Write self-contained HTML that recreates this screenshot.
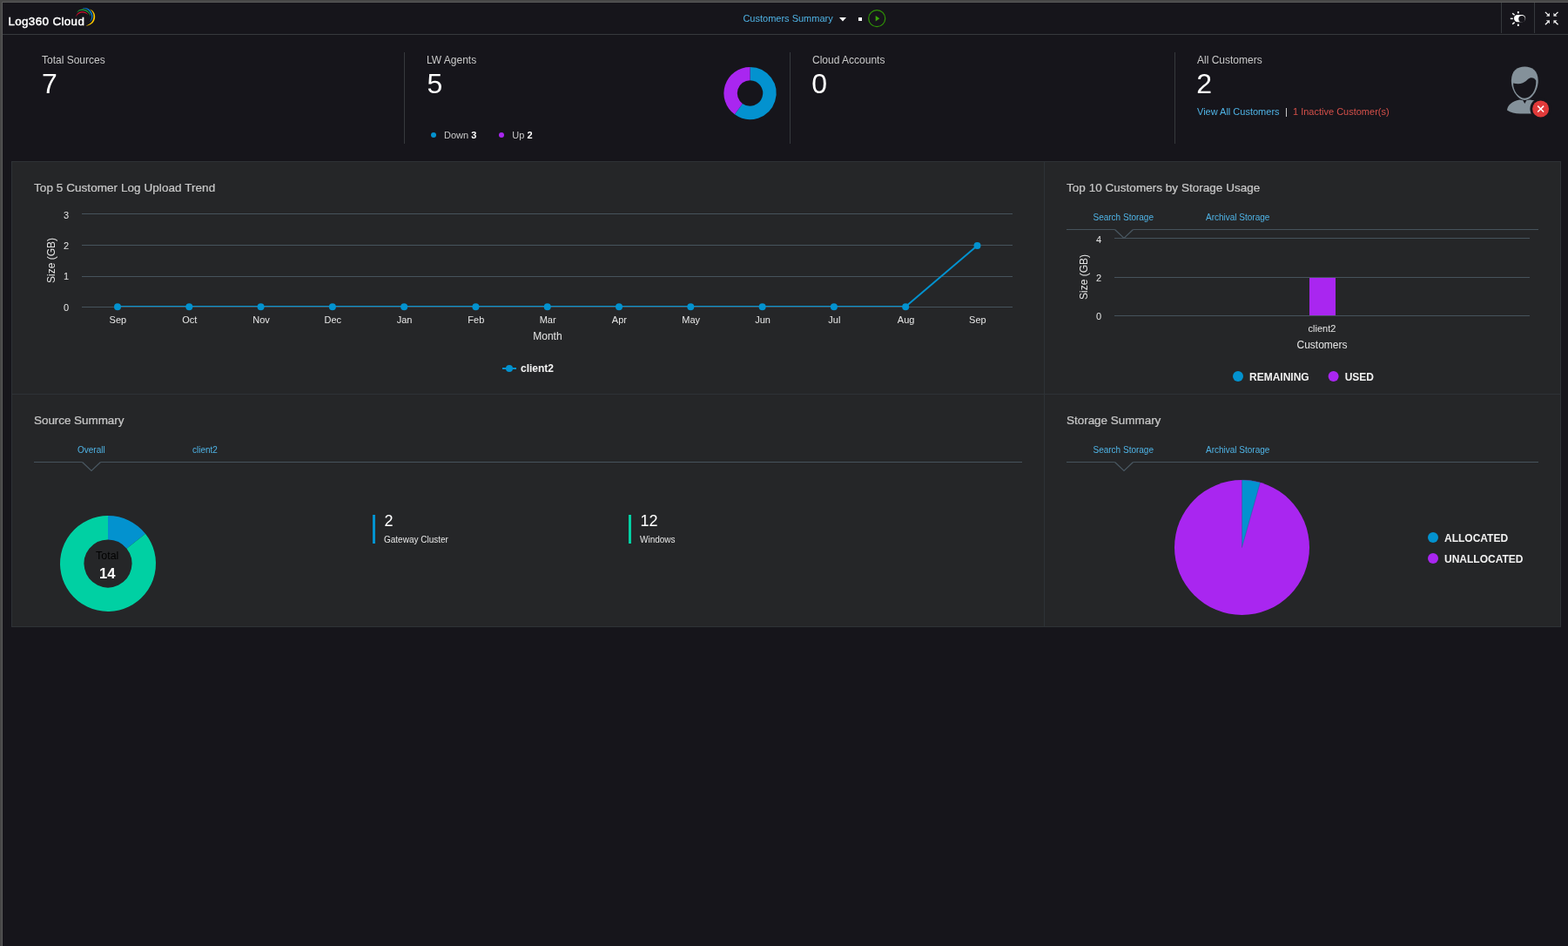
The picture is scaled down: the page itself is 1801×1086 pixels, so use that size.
<!DOCTYPE html>
<html lang="en">
<head>
<meta charset="utf-8">
<title>Log360 Cloud - Customers Summary</title>
<style>
*{box-sizing:border-box;margin:0;padding:0}
html,body{width:1801px;height:1086px;overflow:hidden;background:#16151b}
body{font-family:"Liberation Sans",Arial,sans-serif;color:#fff;position:relative;font-size:12px}
.abs{position:absolute}
.t{position:absolute;white-space:nowrap;line-height:1}
#frameT{left:0;top:0;width:1801px;height:2px;background:#474747}
#frameT2{left:2px;top:2px;width:1799px;height:1px;background:#5a5a5a}
#frameL{left:0;top:0;width:2px;height:1086px;background:#474747}
#frameL2{left:2px;top:2px;width:1px;height:1084px;background:#5a5a5a}
#hdrLine{left:3px;top:39px;width:1798px;height:1px;background:#36393d}
.vsep{position:absolute;width:1px;background:#36393d}
.lbl{font-size:12px;color:#c9c9c9}
.num{font-size:32px;color:#fff}
.link{font-size:11px}
.ptitle{font-size:13.5px;color:#c8c8c8;-webkit-text-stroke:0.22px #c8c8c8}
.tab{font-size:10px;color:#4fb3e5}
#panels{left:13px;top:185px;width:1780px;height:535px;background:#252628;border:1px solid #2e3236}
svg{position:absolute;left:0;top:0;overflow:visible}
svg text{font-family:"Liberation Sans",Arial,sans-serif}
</style>
</head>
<body>
<div id="root" style="position:absolute;left:0;top:0;width:1801px;height:1086px;will-change:transform">
<div class="abs" id="frameT"></div>
<div class="abs" id="frameL"></div>
<div class="abs" id="frameT2"></div>
<div class="abs" id="frameL2"></div>

<!-- HEADER -->
<div class="t" id="logo" style="left:9.4px;top:18.3px;font-size:13.4px;letter-spacing:0.37px;color:#fff;-webkit-text-stroke:0.45px #fff">Log360 Cloud</div>
<div class="t" id="dashname" style="left:853.4px;top:16.200px;font-size:11px;color:#4fb3e5">Customers Summary</div>
<div class="abs" id="hdrLine"></div>
<div class="vsep" style="left:1724px;top:3px;height:35px"></div>
<div class="vsep" style="left:1762px;top:3px;height:35px"></div>

<!-- STATS -->
<div class="vsep" style="left:464px;top:60px;height:105px"></div>
<div class="vsep" style="left:907px;top:60px;height:105px"></div>
<div class="vsep" style="left:1349px;top:60px;height:105px"></div>

<div class="t lbl" style="left:48px;top:63px">Total Sources</div>
<div class="t num" style="left:48px;top:80px">7</div>
<div class="t lbl" style="left:490px;top:63px">LW Agents</div>
<div class="t num" style="left:490.5px;top:80px">5</div>
<div class="t lbl" style="left:933px;top:63px">Cloud Accounts</div>
<div class="t num" style="left:932.3px;top:80px">0</div>
<div class="t lbl" style="left:1375px;top:63px">All Customers</div>
<div class="t num" style="left:1374.3px;top:80px">2</div>

<div class="t" style="left:510px;top:150px;font-size:11px;color:#c9c9c9">Down <b style="color:#fff">3</b></div>
<div class="t" style="left:588.3px;top:150px;font-size:11px;color:#c9c9c9">Up <b style="color:#fff">2</b></div>
<div class="t link" style="left:1375px;top:123px;color:#4fb3e5">View All Customers</div>
<div class="t link" style="left:1476px;top:123px;color:#ddd">|</div>
<div class="t link" style="left:1485px;top:123px;color:#d6504a">1 Inactive Customer(s)</div>

<!-- PANELS -->
<div class="abs" id="panels"></div>
<div class="abs" style="left:1199px;top:186px;width:1px;height:533px;background:#2e3236"></div>
<div class="abs" style="left:14px;top:452px;width:1778px;height:1px;background:#2e3236"></div>

<div class="t ptitle" style="left:39px;top:209px;letter-spacing:0.06px">Top 5 Customer Log Upload Trend</div>
<div class="t ptitle" style="left:1225px;top:209px;letter-spacing:0.03px">Top 10 Customers by Storage Usage</div>
<div class="t ptitle" style="left:39px;top:476px;letter-spacing:-0.06px">Source Summary</div>
<div class="t ptitle" style="left:1225px;top:476px;letter-spacing:-0.03px">Storage Summary</div>

<svg width="1801" height="1086" viewBox="0 0 1801 1086">
<!-- header icons -->
<g id="logoArcs">
  <path d="M87.22 19.13 L87.50 18.84 L87.74 18.53 L87.97 18.21 L88.19 17.90 L88.41 17.59 L88.64 17.30 L88.88 17.03 L89.15 16.78 L89.46 16.53 L89.81 16.28 L90.18 16.03 L90.57 15.79 L90.96 15.56 L91.35 15.34 L91.72 15.16 L92.06 15.00 L92.38 14.87 L92.67 14.76 L92.96 14.68 L93.23 14.61 L93.51 14.56 L93.80 14.53 L94.10 14.51 L94.43 14.49 L94.78 14.50 L95.16 14.52 L95.55 14.56 L95.96 14.61 L96.37 14.67 L96.76 14.74 L97.14 14.83 L97.48 14.92 L97.80 15.03 L98.12 15.15 L98.43 15.30 L98.74 15.47 L99.04 15.64 L99.33 15.81 L99.60 15.97 L99.85 16.12 L100.07 16.25 L100.25 16.37 L100.41 16.49 L100.57 16.61 L100.71 16.73 L100.86 16.85 L101.02 16.97 L101.21 17.07 L101.21 17.07 L101.12 16.88 L101.02 16.71 L100.92 16.54 L100.82 16.38 L100.70 16.21 L100.56 16.04 L100.40 15.85 L100.21 15.66 L99.99 15.45 L99.76 15.23 L99.50 15.00 L99.22 14.76 L98.91 14.53 L98.58 14.30 L98.23 14.09 L97.86 13.91 L97.47 13.75 L97.06 13.61 L96.63 13.48 L96.18 13.38 L95.73 13.29 L95.29 13.22 L94.85 13.17 L94.44 13.16 L94.05 13.16 L93.67 13.18 L93.31 13.23 L92.95 13.30 L92.59 13.39 L92.23 13.51 L91.87 13.66 L91.50 13.83 L91.12 14.04 L90.72 14.28 L90.32 14.55 L89.92 14.85 L89.53 15.16 L89.16 15.49 L88.82 15.83 L88.52 16.17 L88.26 16.53 L88.04 16.90 L87.86 17.26 L87.70 17.63 L87.56 18.00 L87.44 18.37 L87.32 18.74 L87.22 19.13Z" fill="#d4102e"/>
  <path d="M88.25 14.41 L88.61 14.20 L88.95 13.95 L89.28 13.68 L89.60 13.42 L89.92 13.17 L90.23 12.94 L90.54 12.74 L90.83 12.57 L91.13 12.44 L91.44 12.32 L91.75 12.22 L92.07 12.14 L92.39 12.08 L92.71 12.02 L93.03 11.97 L93.35 11.94 L93.66 11.91 L93.97 11.89 L94.26 11.88 L94.56 11.89 L94.86 11.90 L95.17 11.93 L95.48 11.97 L95.80 12.02 L96.13 12.09 L96.48 12.16 L96.83 12.25 L97.18 12.34 L97.53 12.45 L97.87 12.57 L98.21 12.70 L98.54 12.84 L98.86 13.00 L99.20 13.19 L99.53 13.38 L99.86 13.59 L100.19 13.81 L100.50 14.04 L100.80 14.28 L101.08 14.52 L101.35 14.78 L101.61 15.07 L101.87 15.37 L102.12 15.69 L102.36 16.01 L102.58 16.33 L102.79 16.63 L102.97 16.92 L103.13 17.17 L103.25 17.41 L103.35 17.65 L103.45 17.88 L103.53 18.12 L103.62 18.36 L103.72 18.60 L103.86 18.83 L103.86 18.83 L103.87 18.56 L103.86 18.31 L103.85 18.05 L103.83 17.80 L103.80 17.53 L103.75 17.24 L103.67 16.94 L103.57 16.63 L103.43 16.29 L103.28 15.94 L103.11 15.56 L102.91 15.18 L102.69 14.80 L102.46 14.42 L102.20 14.06 L101.92 13.72 L101.63 13.40 L101.31 13.09 L100.98 12.79 L100.64 12.51 L100.28 12.25 L99.91 12.00 L99.54 11.78 L99.17 11.57 L98.78 11.38 L98.38 11.22 L97.98 11.07 L97.58 10.95 L97.18 10.84 L96.78 10.75 L96.39 10.68 L96.02 10.62 L95.65 10.57 L95.28 10.55 L94.92 10.53 L94.56 10.54 L94.21 10.55 L93.86 10.59 L93.50 10.64 L93.16 10.71 L92.81 10.79 L92.46 10.88 L92.11 10.99 L91.75 11.11 L91.40 11.25 L91.05 11.42 L90.71 11.62 L90.37 11.84 L90.06 12.10 L89.76 12.39 L89.48 12.70 L89.21 13.03 L88.95 13.37 L88.71 13.71 L88.47 14.06 L88.25 14.41Z" fill="#239a3b"/>
  <path d="M94.73 9.85 L95.11 9.91 L95.48 9.93 L95.86 9.94 L96.23 9.94 L96.59 9.95 L96.95 9.97 L97.30 10.00 L97.64 10.06 L97.99 10.13 L98.34 10.21 L98.69 10.31 L99.03 10.41 L99.37 10.54 L99.70 10.67 L100.01 10.83 L100.32 11.00 L100.62 11.21 L100.93 11.44 L101.24 11.69 L101.55 11.96 L101.85 12.25 L102.14 12.55 L102.42 12.85 L102.68 13.15 L102.92 13.46 L103.15 13.79 L103.37 14.13 L103.58 14.48 L103.79 14.84 L103.97 15.20 L104.15 15.55 L104.31 15.90 L104.46 16.24 L104.59 16.58 L104.71 16.92 L104.81 17.25 L104.90 17.58 L104.98 17.92 L105.03 18.24 L105.08 18.57 L105.10 18.90 L105.10 19.24 L105.09 19.59 L105.06 19.95 L105.02 20.30 L104.97 20.66 L104.91 21.00 L104.84 21.33 L104.76 21.64 L104.67 21.96 L104.55 22.27 L104.42 22.59 L104.29 22.89 L104.16 23.18 L104.04 23.46 L103.93 23.71 L103.84 23.92 L103.75 24.10 L103.66 24.26 L103.58 24.41 L103.49 24.55 L103.41 24.69 L103.33 24.84 L103.27 25.02 L103.27 25.02 L103.42 24.92 L103.56 24.81 L103.68 24.71 L103.81 24.60 L103.94 24.47 L104.08 24.33 L104.22 24.17 L104.37 23.97 L104.54 23.75 L104.72 23.51 L104.92 23.25 L105.11 22.96 L105.31 22.65 L105.50 22.33 L105.67 21.99 L105.82 21.64 L105.95 21.29 L106.07 20.92 L106.18 20.54 L106.28 20.15 L106.36 19.74 L106.42 19.33 L106.46 18.92 L106.47 18.51 L106.45 18.10 L106.42 17.69 L106.36 17.28 L106.27 16.88 L106.17 16.48 L106.05 16.08 L105.92 15.68 L105.76 15.28 L105.59 14.89 L105.40 14.48 L105.19 14.07 L104.96 13.67 L104.71 13.27 L104.45 12.88 L104.16 12.50 L103.86 12.14 L103.54 11.80 L103.21 11.47 L102.85 11.16 L102.48 10.85 L102.10 10.57 L101.71 10.31 L101.32 10.08 L100.92 9.87 L100.52 9.70 L100.11 9.56 L99.70 9.45 L99.30 9.37 L98.89 9.30 L98.49 9.26 L98.10 9.24 L97.71 9.23 L97.31 9.24 L96.92 9.28 L96.54 9.35 L96.17 9.43 L95.81 9.52 L95.44 9.62 L95.09 9.72 L94.73 9.85Z" fill="#0a7ccf"/>
  <path d="M103.27 10.59 L103.54 10.93 L103.85 11.23 L104.17 11.51 L104.48 11.80 L104.79 12.08 L105.08 12.36 L105.34 12.65 L105.58 12.95 L105.80 13.28 L106.02 13.63 L106.22 14.00 L106.42 14.37 L106.60 14.75 L106.76 15.13 L106.90 15.50 L107.03 15.85 L107.13 16.20 L107.22 16.53 L107.29 16.87 L107.34 17.21 L107.38 17.55 L107.41 17.89 L107.43 18.23 L107.44 18.58 L107.45 18.92 L107.44 19.25 L107.41 19.59 L107.38 19.93 L107.34 20.26 L107.28 20.60 L107.21 20.93 L107.13 21.27 L107.04 21.62 L106.94 21.97 L106.82 22.33 L106.70 22.68 L106.56 23.03 L106.42 23.36 L106.26 23.69 L106.09 24.00 L105.91 24.30 L105.72 24.60 L105.52 24.89 L105.30 25.17 L105.07 25.45 L104.83 25.72 L104.57 25.99 L104.30 26.25 L104.02 26.50 L103.71 26.75 L103.38 26.99 L103.03 27.24 L102.67 27.48 L102.31 27.71 L101.95 27.94 L101.60 28.16 L101.26 28.36 L100.92 28.55 L100.57 28.74 L100.23 28.92 L99.88 29.10 L99.53 29.29 L99.18 29.49 L98.85 29.73 L98.85 29.73 L99.26 29.69 L99.65 29.61 L100.03 29.53 L100.42 29.44 L100.81 29.34 L101.20 29.22 L101.60 29.10 L101.99 28.95 L102.39 28.79 L102.79 28.62 L103.21 28.44 L103.62 28.25 L104.03 28.04 L104.43 27.82 L104.82 27.58 L105.18 27.33 L105.53 27.06 L105.85 26.78 L106.17 26.49 L106.47 26.19 L106.75 25.88 L107.02 25.55 L107.27 25.21 L107.51 24.86 L107.74 24.49 L107.95 24.11 L108.14 23.71 L108.31 23.31 L108.46 22.90 L108.60 22.50 L108.73 22.09 L108.83 21.70 L108.92 21.30 L109.00 20.90 L109.06 20.50 L109.10 20.10 L109.13 19.70 L109.14 19.30 L109.13 18.90 L109.11 18.50 L109.07 18.11 L109.02 17.71 L108.96 17.32 L108.88 16.92 L108.78 16.52 L108.66 16.12 L108.51 15.73 L108.35 15.33 L108.15 14.94 L107.94 14.54 L107.71 14.15 L107.45 13.76 L107.18 13.38 L106.89 13.01 L106.58 12.67 L106.26 12.34 L105.92 12.04 L105.56 11.78 L105.19 11.54 L104.82 11.33 L104.44 11.13 L104.05 10.93 L103.67 10.75 L103.27 10.59Z" fill="#fcc800"/>
</g>
<path d="M964 20.100 h8 l-4 4.400 z" fill="#fff"/>
<rect x="986" y="20" width="4" height="4" fill="#fff"/>
<circle cx="1007.200" cy="21.150" r="9.500" fill="none" stroke="#2f9206" stroke-width="1.250"/>
<path d="M1005.700 17.900 L1010.300 21.250 L1005.700 24.600 Z" fill="#3aa50a"/>
<g id="sun" fill="#fff" stroke="#fff">
  <rect x="1738.900" y="16.900" width="13.300" height="8.400" rx="4.200" ry="4.200" stroke="none"/>
  <circle cx="1748" cy="21.650" r="3.750" fill="#16151b" stroke="none"/>
  <line x1="1743.800" y1="13.100" x2="1743.800" y2="15.400" stroke-width="1.800"/>
  <line x1="1743.800" y1="27.600" x2="1743.800" y2="30" stroke-width="1.800"/>
  <line x1="1734.800" y1="21.400" x2="1737.800" y2="21.400" stroke-width="1.500"/>
  <line x1="1737.200" y1="15.200" x2="1739.600" y2="17.300" stroke-width="1.500"/>
  <line x1="1737.200" y1="27.700" x2="1739.600" y2="25.600" stroke-width="1.500"/>
</g>
<g id="collapse">
  <path d="M1774.9 13.9 L1778.8 17.6" fill="none" stroke="#fff" stroke-width="1.3"/><path d="M1780.0 18.8 L1780.0 14.8 L1775.8 18.8 Z" fill="#fff" fill-opacity="0.8" stroke="none"/>
  <path d="M1789.5 13.9 L1785.6 17.6" fill="none" stroke="#fff" stroke-width="1.3"/><path d="M1784.4 18.8 L1784.4 14.8 L1788.6 18.8 Z" fill="#fff" fill-opacity="0.8" stroke="none"/>
  <path d="M1774.9 28.2 L1778.8 24.5" fill="none" stroke="#fff" stroke-width="1.3"/><path d="M1780.0 23.3 L1780.0 27.3 L1775.8 23.3 Z" fill="#fff" fill-opacity="0.8" stroke="none"/>
  <path d="M1789.5 28.2 L1785.6 24.5" fill="none" stroke="#fff" stroke-width="1.3"/><path d="M1784.4 23.3 L1784.4 27.3 L1788.6 23.3 Z" fill="#fff" fill-opacity="0.8" stroke="none"/>
</g>

<!-- LW agents donut -->
<g id="lwdonut" fill="none" stroke-width="15.4">
  <path d="M861.50 84.60 A22.4 22.4 0 1 1 848.33 125.12" stroke="#0392cf"/>
  <path d="M848.33 125.12 A22.4 22.4 0 0 1 861.50 84.60" stroke="#a926f0"/>
</g>
<circle cx="498" cy="155" r="3" fill="#0392cf"/>
<circle cx="576" cy="155" r="3" fill="#a926f0"/>

<!-- user icon -->
<g id="usericon">
  <path d="M1731 126.500 C1731.800 120.500 1736.500 116.200 1745.500 114.500 L1749.300 115.300 L1751.300 118.900 L1753.300 115.300 L1757 114.500 L1763 115.500 L1763 130.600 L1746 130.600 C1740 130.200 1735 129.200 1731 126.500 Z" fill="#84919a"/>
  <path d="M1751.300 76.500 C1760 76.500 1766.300 81 1766.700 92 C1767.100 103.500 1759 115 1751.300 115 C1743.600 115 1735.500 103.500 1735.900 92 C1736.300 81 1742.600 76.500 1751.300 76.500 Z" fill="#84919a"/>
  <path d="M1738.100 95.400 C1742 96.500 1746 96.400 1749 95.300 C1753 93.800 1755 90 1758 89.300 C1760.500 88.800 1763 90 1764.300 92.500 C1764.800 104 1758 112.700 1751.300 112.700 C1744.500 112.700 1737.600 104 1738.100 95.400 Z" fill="#16151b"/>
  <circle cx="1769.600" cy="125" r="12.200" fill="#16151b"/>
  <circle cx="1769.600" cy="125" r="9.500" fill="#e03a3a"/>
  <path d="M1766.200 121.600 l6.900 6.900 M1773.100 121.600 l-6.900 6.900" stroke="#fff" stroke-width="1.500" fill="none"/>
</g>

<!-- LINE CHART -->
<g id="linechart">
  <g stroke="#46535c" stroke-width="1" shape-rendering="crispEdges">
    <line x1="94" y1="245.5" x2="1163" y2="245.5"/>
    <line x1="94" y1="281.5" x2="1163" y2="281.5"/>
    <line x1="94" y1="317.5" x2="1163" y2="317.5"/>
    <line x1="94" y1="352.500" x2="1163" y2="352.500"/>
  </g>
  <g font-size="11" fill="#e6e6e6" text-anchor="end">
    <text x="79" y="251">3</text>
    <text x="79" y="285.500">2</text>
    <text x="79" y="321">1</text>
    <text x="79" y="356.500">0</text>
  </g>
  <text transform="translate(63,299) rotate(-90)" font-size="12" fill="#e6e6e6" text-anchor="middle">Size (GB)</text>
  <clipPath id="lcclip"><rect x="94" y="240" width="1069" height="112"/></clipPath>
  <polyline points="135.00,352 217.29,352 299.58,352 381.87,352 464.16,352 546.45,352 628.74,352 711.03,352 793.32,352 875.61,352 957.90,352 1040.19,352 1122.48,282" fill="none" stroke="#0392cf" stroke-width="2" clip-path="url(#lcclip)"/>
  <g fill="#0392cf">
    <circle cx="135.00" cy="352.3" r="4"/><circle cx="217.29" cy="352.3" r="4"/><circle cx="299.58" cy="352.3" r="4"/><circle cx="381.87" cy="352.3" r="4"/><circle cx="464.16" cy="352.3" r="4"/><circle cx="546.45" cy="352.3" r="4"/><circle cx="628.74" cy="352.3" r="4"/><circle cx="711.03" cy="352.3" r="4"/><circle cx="793.32" cy="352.3" r="4"/><circle cx="875.61" cy="352.3" r="4"/><circle cx="957.90" cy="352.3" r="4"/><circle cx="1040.19" cy="352.3" r="4"/><circle cx="1122.48" cy="282" r="4"/>
  </g>
  <g font-size="11" fill="#e6e6e6" text-anchor="middle">
    <text x="135.40" y="371">Sep</text><text x="217.69" y="371">Oct</text><text x="299.98" y="371">Nov</text><text x="382.27" y="371">Dec</text><text x="464.56" y="371">Jan</text><text x="546.85" y="371">Feb</text><text x="629.14" y="371">Mar</text><text x="711.43" y="371">Apr</text><text x="793.72" y="371">May</text><text x="876.01" y="371">Jun</text><text x="958.30" y="371">Jul</text><text x="1040.59" y="371">Aug</text><text x="1122.88" y="371">Sep</text>
  </g>
  <text x="628.900" y="390" font-size="12" fill="#e6e6e6" text-anchor="middle">Month</text>
  <line x1="577" y1="423" x2="593" y2="423" stroke="#0392cf" stroke-width="2"/>
  <circle cx="585" cy="423" r="4" fill="#0392cf"/>
  <text x="598" y="427" font-size="12" font-weight="bold" fill="#f2f2f2">client2</text>
</g>

<!-- BAR CHART -->
<g id="barchart">
  <path d="M1225 263.500 H1280.500 M1301.500 263.500 H1767" fill="none" stroke="#46535c" stroke-width="1"/><path d="M1280.500 263.500 L1291 273.500 L1301.500 263.500" fill="none" stroke="#4a5862" stroke-width="1.250"/>
  <g stroke="#46535c" stroke-width="1" shape-rendering="crispEdges">
    <line x1="1280" y1="273.500" x2="1757" y2="273.500"/>
    <line x1="1280" y1="318.500" x2="1757" y2="318.500"/>
    <line x1="1280" y1="362.500" x2="1757" y2="362.500"/>
  </g>
  <rect x="1504" y="319" width="30" height="43" fill="#a926f0"/>
  <g font-size="11" fill="#e6e6e6" text-anchor="end">
    <text x="1265" y="279">4</text>
    <text x="1265" y="323">2</text>
    <text x="1265" y="367">0</text>
  </g>
  <text transform="translate(1249,318) rotate(-90)" font-size="12" fill="#e6e6e6" text-anchor="middle">Size (GB)</text>
  <text x="1518.500" y="381" font-size="11" fill="#e6e6e6" text-anchor="middle">client2</text>
  <text x="1518.500" y="400" font-size="12" fill="#e6e6e6" text-anchor="middle">Customers</text>
  <circle cx="1422" cy="432" r="6" fill="#0392cf"/>
  <text x="1435" y="437" font-size="12" font-weight="bold" fill="#f2f2f2">REMAINING</text>
  <circle cx="1531.600" cy="432" r="6" fill="#a926f0"/>
  <text x="1544.700" y="437" font-size="12" font-weight="bold" fill="#f2f2f2">USED</text>
</g>

<!-- SOURCE SUMMARY -->
<g id="source">
  <path d="M39 530.500 H94.500 M115.500 530.500 H1174" fill="none" stroke="#46535c" stroke-width="1"/><path d="M94.500 530.500 L105 540.500 L115.500 530.500" fill="none" stroke="#4a5862" stroke-width="1.250"/>
  <g fill="none" stroke-width="27.5">
  <path d="M124.00 605.75 A41.25 41.25 0 0 1 156.25 621.28" stroke="#0392cf"/>
  <path d="M156.25 621.28 A41.25 41.25 0 1 1 124.00 605.75" stroke="#00d0a3"/>
  </g>
  <text x="123.2" y="642" font-size="12.4" fill="#000" text-anchor="middle">Total</text>
  <text x="123.2" y="664" font-size="16.6" font-weight="bold" fill="#fff" text-anchor="middle">14</text>
  <rect x="428" y="591" width="3" height="33" fill="#0392cf"/>
  <rect x="722" y="591" width="3" height="33" fill="#00d0a3"/>
</g>

<!-- STORAGE SUMMARY -->
<g id="storage">
  <path d="M1225 530.500 H1280.500 M1301.500 530.500 H1767" fill="none" stroke="#46535c" stroke-width="1"/><path d="M1280.500 530.500 L1291 540.500 L1301.500 530.500" fill="none" stroke="#4a5862" stroke-width="1.250"/>
  <circle cx="1426.5" cy="628.5" r="77.5" fill="#a926f0"/>
  <path d="M1426.5 628.5 L1426.5 551.0 A77.5 77.5 0 0 1 1447.47 553.89 Z" fill="#0392cf" stroke="#3a4a8a" stroke-width="0.4"/>
  <circle cx="1646" cy="617" r="6" fill="#0392cf"/>
  <text x="1659" y="622" font-size="12" font-weight="bold" fill="#f2f2f2">ALLOCATED</text>
  <circle cx="1646" cy="641" r="6" fill="#a926f0"/>
  <text x="1659" y="646" font-size="12" font-weight="bold" fill="#f2f2f2">UNALLOCATED</text>
</g>
</svg>

<!-- tabs & html texts -->
<div class="t tab" style="left:1255.500px;top:245px">Search Storage</div>
<div class="t tab" style="left:1385px;top:245px">Archival Storage</div>
<div class="t tab" style="left:89px;top:512px">Overall</div>
<div class="t tab" style="left:221px;top:512px">client2</div>
<div class="t tab" style="left:1255.500px;top:512px">Search Storage</div>
<div class="t tab" style="left:1385px;top:512px">Archival Storage</div>

<div class="t" style="left:441.400px;top:589px;font-size:18px;color:#fff">2</div>
<div class="t" style="left:441px;top:615px;font-size:10px;color:#e6e6e6">Gateway Cluster</div>
<div class="t" style="left:735.400px;top:589px;font-size:18px;color:#fff">12</div>
<div class="t" style="left:735px;top:615px;font-size:10px;color:#e6e6e6">Windows</div>

</div>
</body>
</html>
